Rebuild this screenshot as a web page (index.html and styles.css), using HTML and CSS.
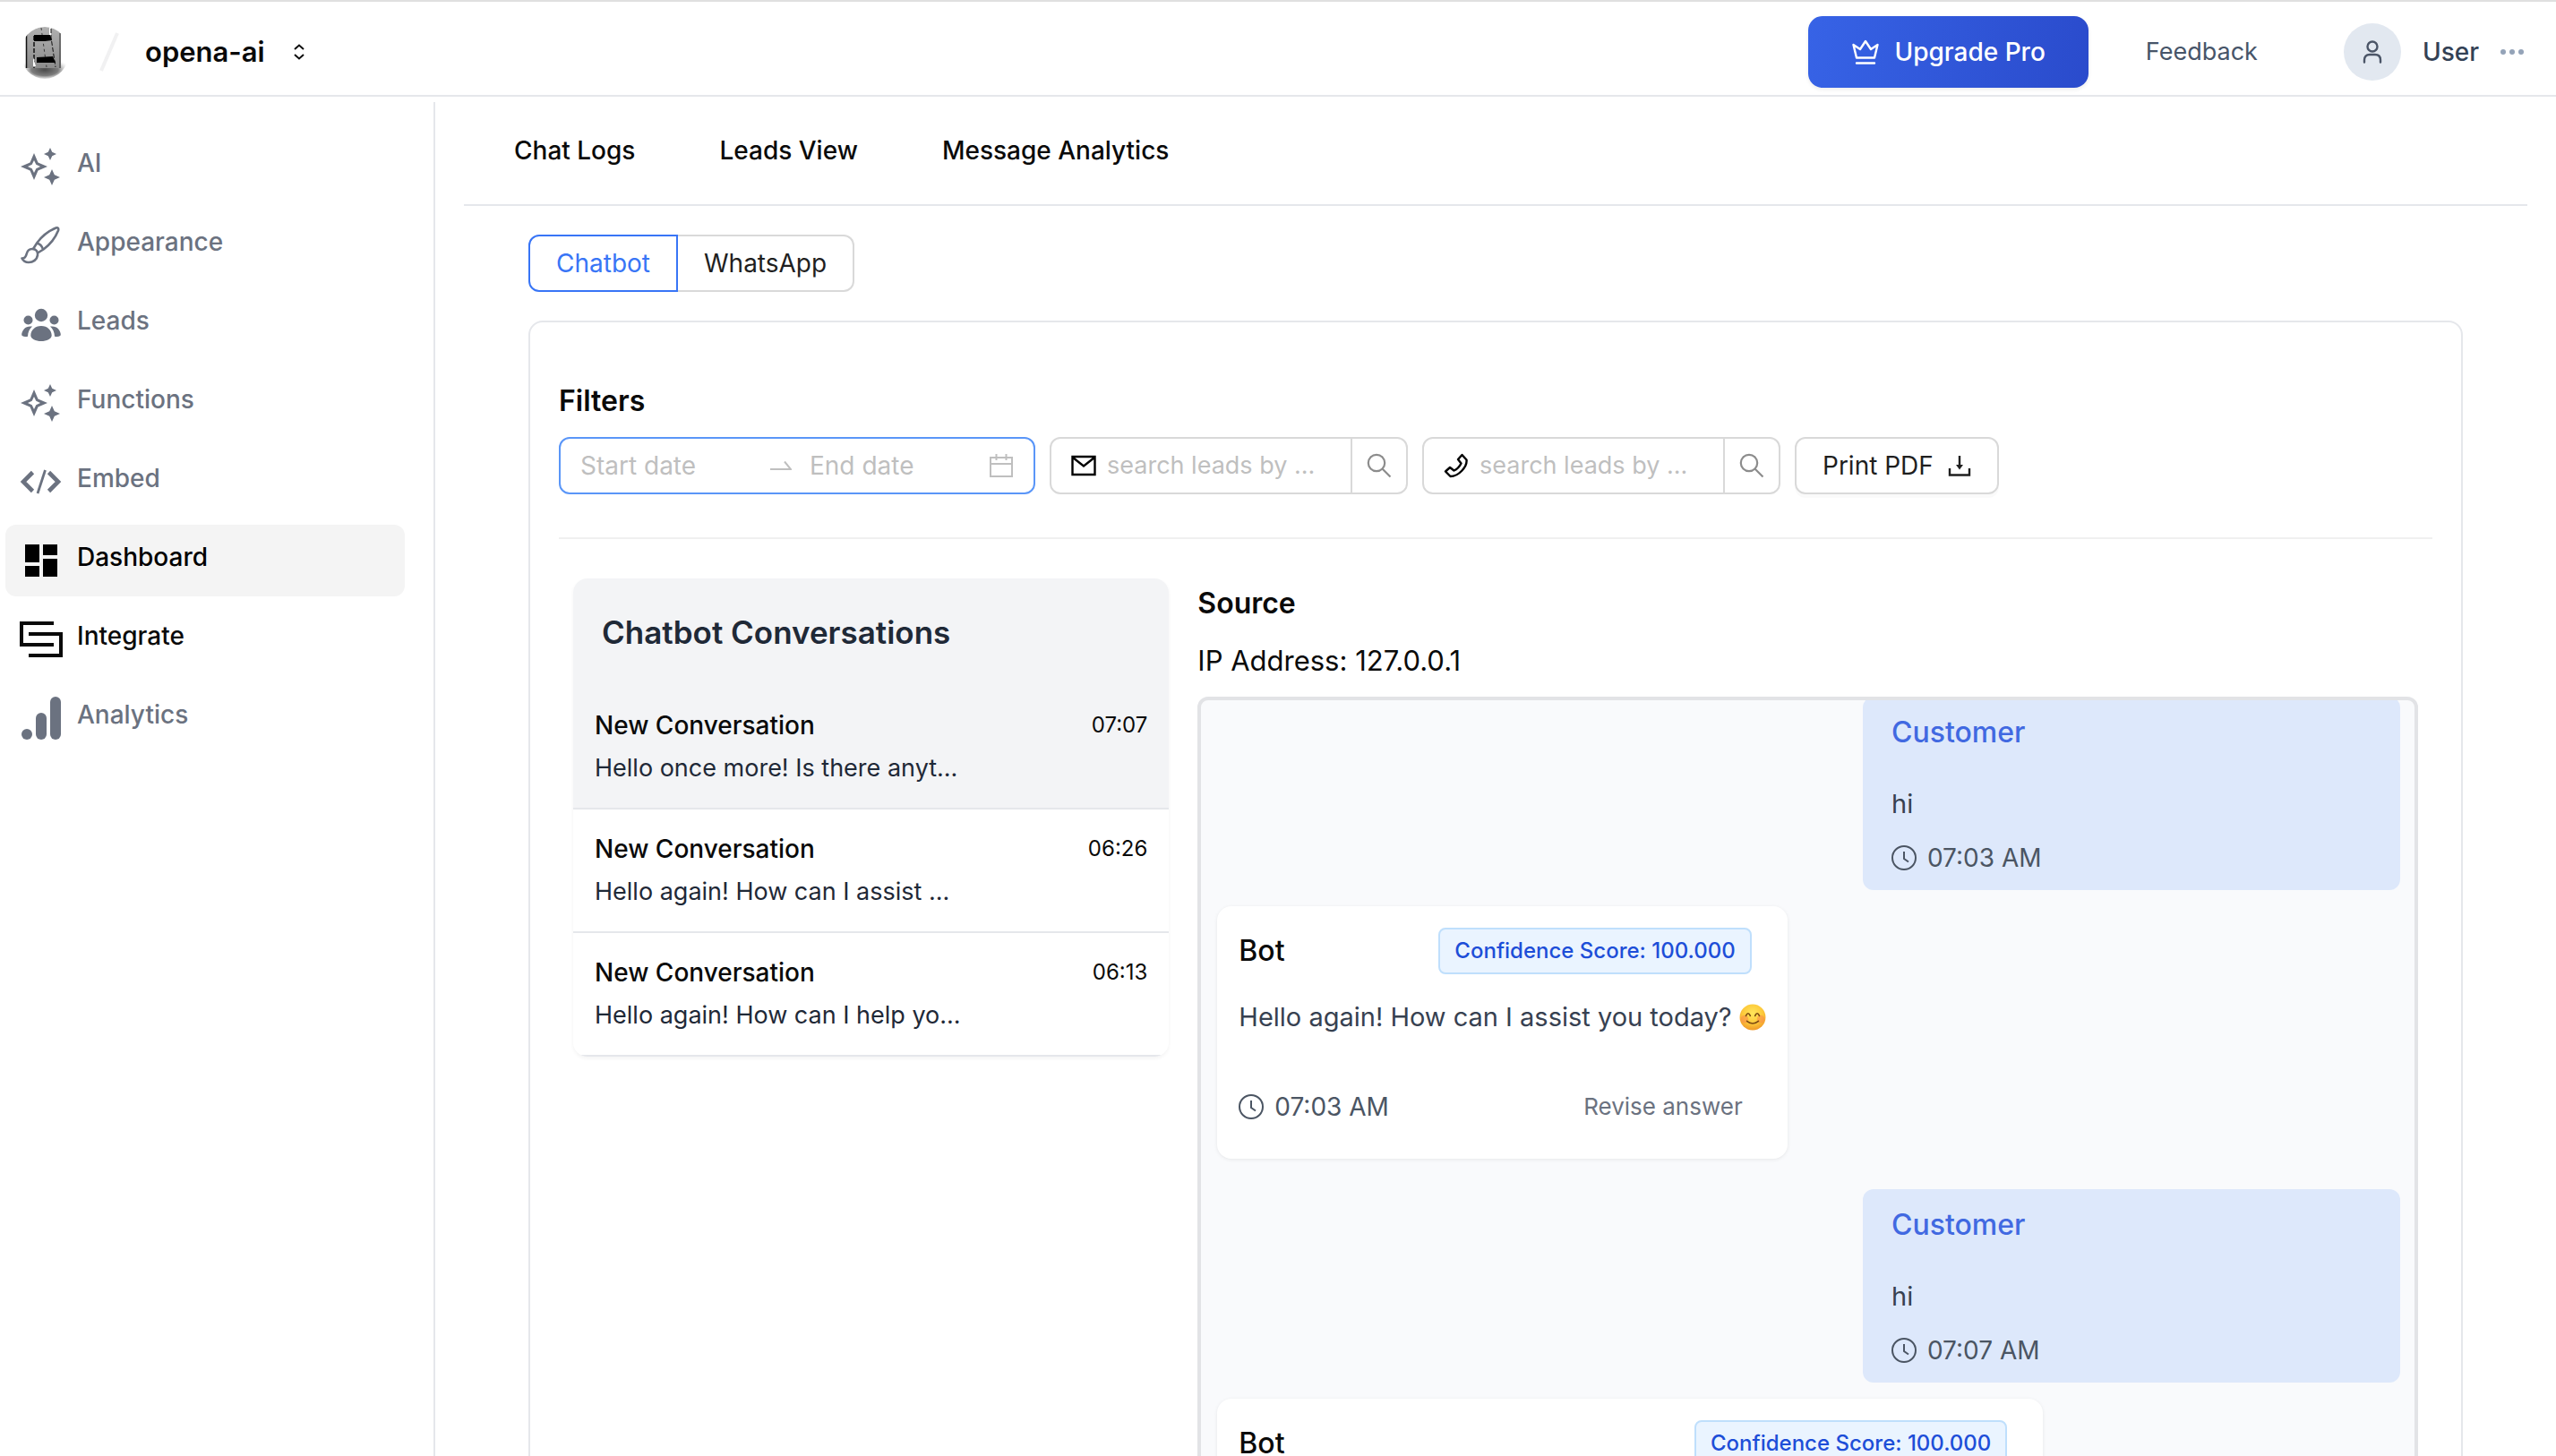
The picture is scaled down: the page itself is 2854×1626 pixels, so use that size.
FILE: index.html
```html
<!DOCTYPE html>
<html lang="en">
<head>
<meta charset="utf-8">
<meta name="viewport" content="width=device-width, initial-scale=1">
<title>opena-ai – Dashboard</title>
<link rel="stylesheet" href="styles.css">
</head>
<body>
<div class="app">
  <header class="topbar">
    <a class="logo" href="#" aria-label="Home">
      <svg width="56" height="60" viewBox="0 0 56 60">
        <defs>
          <radialGradient id="shade" cx="28" cy="50" r="30" gradientTransform="translate(0 28) scale(1 .44)" gradientUnits="userSpaceOnUse">
            <stop offset="0" stop-color="#4a4a4a"/><stop offset=".5" stop-color="#7d7d7d"/><stop offset="1" stop-color="#fff" stop-opacity="0"/>
          </radialGradient>
          <linearGradient id="metal" x1="0" y1="0" x2="0" y2="1">
            <stop offset="0" stop-color="#b0b0b0"/><stop offset="1" stop-color="#8c8c8c"/>
          </linearGradient>
          <clipPath id="round"><ellipse cx="28" cy="31" rx="27" ry="29"/></clipPath>
        </defs>
        <g clip-path="url(#round)">
          <ellipse cx="28" cy="50" rx="30" ry="13" fill="url(#shade)"/>
          <path d="M7 10Q16 2 28 2t18 7V48H7z" fill="url(#metal)"/>
          <path d="M33 2h2v10h-2z" fill="#fff"/>
          <path d="M35 4v10l5 33" fill="none" stroke="#111" stroke-dasharray="5 2"/>
          <path d="M7.500 9v39" stroke="#111" stroke-width="1.500"/>
          <path d="M45 9v39" stroke="#333"/>
          <path d="M16 12v36" stroke="#111" stroke-width="1.500" stroke-dasharray="5 2"/>
          <path d="M24 3l6 44" stroke="#222" stroke-width=".8" stroke-dasharray="3 3"/>
          <path d="M16 11h18l2 6-8 1H16zM19 36l18-1 3 7H19z" fill="#000"/>
          <path d="M15 36l3 10h-3z" fill="#fff"/>
        </g>
      </svg>
    </a>
    <svg class="slash" width="24" height="44" viewBox="0 0 24 44"><path d="M3 43L21 1" stroke="#f1f1f2" stroke-width="4"/></svg>
    <button class="project" type="button">opena-ai
      <svg width="12" height="18" viewBox="0 0 12 18" fill="none" stroke="#0a0a0a" stroke-width="2"><path d="M1 6l5-4.500L11 6M1 12l5 4.500L11 12"/></svg>
    </button>
    <button class="upgrade" type="button">
      <svg width="32" height="32" viewBox="0 0 32 32" fill="none" stroke="#fff" stroke-width="2.400" stroke-linejoin="round" stroke-linecap="round"><path d="M2.500 8l7.500 5 6-9 6 9 7.500-5-3.500 14.500h-20zM6 28.500h20"/></svg>
      Upgrade Pro
    </button>
    <a class="feedback" href="#">Feedback</a>
    <button class="account" type="button">
      <span class="avatar"><svg width="24" height="28" viewBox="0 0 24 28" fill="none" stroke="#4b5567" stroke-width="2.400" stroke-linecap="round"><circle cx="12" cy="8" r="5.500"/><path d="M3 25.500v-2.500q0-6 6-6h6q6 0 6 6v2.500"/></svg></span>
      User
      <svg class="dots" width="26" height="6" viewBox="0 0 26 6" fill="#94a3b8"><circle cx="3" cy="3" r="3"/><circle cx="13" cy="3" r="3"/><circle cx="23" cy="3" r="3"/></svg>
    </button>
  </header>

  <div class="body">
    <nav class="sidebar" aria-label="Main">
      <a class="nav-item" href="#">
        <svg class="nav-icon" viewBox="0 0 48 48" fill="currentColor"><path fill-rule="evenodd" d="M16 9l4.500 10.500L31 24l-10.500 4.500L16 39l-4.500-10.500L1 24l10.500-4.500zM16 17l-2.300 4.700L9 24l4.700 2.300L16 31l2.300-4.700L23 24l-4.700-2.300z"/><path d="M34 3l2.200 4.800L41 10l-4.800 2.200L34 17l-2.200-4.800L27 10l4.800-2.200zM36 27l2.800 6.200L45 36l-6.200 2.800L36 45l-2.800-6.200L27 36l6.200-2.800z"/></svg>
        <span class="nav-label">AI</span></a>
      <a class="nav-item" href="#">
        <svg class="nav-icon" viewBox="0 0 48 48" fill="none" stroke="currentColor" stroke-width="2.600" stroke-linejoin="round"><path d="M2.500 38.500c3 .3 4.500-2 5.200-5C8.500 30 11 28 14 28c4.500 0 6.500 3 6 7-.7 5-5 8-10 8-4 0-6-1.500-7.500-4.500z"/><path d="M15 28l4.500-7C25 13.500 33 7.500 40.500 4.500c2.200-.7 3.200.8 2.500 3C40 15 34 23 26.500 28.500L20 32.500M19 21.500c3.500.7 6 3.500 7 7"/></svg>
        <span class="nav-label">Appearance</span></a>
      <a class="nav-item" href="#">
        <svg class="nav-icon" viewBox="0 0 48 48" fill="currentColor"><circle cx="24" cy="14" r="7.200"/><circle cx="9.500" cy="19.500" r="5"/><circle cx="38.500" cy="19.500" r="5"/><path d="M24 26c-7 0-11.700 5-11.700 10.500 0 4 5.700 6.500 11.700 6.500s11.700-2.500 11.700-6.500C35.700 31 31 26 24 26zM14 26.600c-3.700-.6-7 .3-9 2.700s-2.800 4.700-2.800 6.200c0 2.500 3 2.600 6.800 2.200.2-4.500 2-8.500 5-11.100zM34 26.600c3.700-.6 7 .3 9 2.700s2.800 4.700 2.800 6.200c0 2.500-3 2.600-6.800 2.200-.2-4.500-2-8.500-5-11.100z"/></svg>
        <span class="nav-label">Leads</span></a>
      <a class="nav-item" href="#">
        <svg class="nav-icon" viewBox="0 0 48 48" fill="currentColor"><path fill-rule="evenodd" d="M16 9l4.500 10.500L31 24l-10.500 4.500L16 39l-4.500-10.500L1 24l10.500-4.500zM16 17l-2.300 4.700L9 24l4.700 2.300L16 31l2.300-4.700L23 24l-4.700-2.300z"/><path d="M34 3l2.200 4.800L41 10l-4.800 2.200L34 17l-2.200-4.800L27 10l4.800-2.200zM36 27l2.800 6.200L45 36l-6.200 2.800L36 45l-2.800-6.200L27 36l6.200-2.800z"/></svg>
        <span class="nav-label">Functions</span></a>
      <a class="nav-item" href="#">
        <svg class="nav-icon" viewBox="0 0 48 48" fill="none" stroke="currentColor" stroke-width="4.600"><path d="M14.500 13.500L4 24l10.500 10.500M32.500 13.500L43 24 32.500 34.500"/><path d="M28.500 11L20 37" stroke-width="2.800"/></svg>
        <span class="nav-label">Embed</span></a>
      <a class="nav-item active" href="#" aria-current="page">
        <svg class="nav-icon" viewBox="0 0 48 48" fill="currentColor"><path d="M6 6h16v20H6zM26 6h16v12H26zM6 30h16v12H6zM26 22h16v20H26z"/></svg>
        <span class="nav-label">Dashboard</span></a>
      <a class="nav-item dark" href="#">
        <svg class="nav-icon" viewBox="0 0 48 48" fill="none" stroke="currentColor" stroke-width="4"><path d="M38 6H2v24h36M10 18h36v24H10"/></svg>
        <span class="nav-label">Integrate</span></a>
      <a class="nav-item" href="#">
        <svg class="nav-icon" viewBox="0 0 48 48" fill="currentColor"><circle cx="8" cy="42" r="6"/><rect x="18" y="18" width="12" height="30" rx="6"/><rect x="34" y="0" width="12" height="48" rx="6"/></svg>
        <span class="nav-label">Analytics</span></a>
    </nav>

    <main class="main">
      <nav class="tabs" aria-label="Dashboard views">
        <a href="#">Chat Logs</a>
        <a href="#">Leads View</a>
        <a href="#">Message Analytics</a>
      </nav>

      <div class="content">
        <div class="segmented">
          <button class="segment selected" type="button" aria-pressed="true">Chatbot</button>
          <button class="segment" type="button" aria-pressed="false">WhatsApp</button>
        </div>

        <section class="panel">
          <h2 class="filters-title">Filters</h2>
          <div class="filters">
            <div class="date-range">
              <input class="start" type="text" placeholder="Start date" aria-label="Start date">
              <svg width="24" height="12" viewBox="0 0 24 12" fill="none" stroke="#bfbfbf" stroke-width="2"><path d="M0 10h23L16 1.500"/></svg>
              <input class="end" type="text" placeholder="End date" aria-label="End date">
              <svg width="28" height="28" viewBox="0 0 28 28" fill="none" stroke="#bfbfbf" stroke-width="2"><path d="M2 5h24v21H2zM2 12h24M8.500 1v7M19.500 1v7"/></svg>
            </div>
            <div class="search">
              <svg width="28" height="24" viewBox="0 0 28 24" fill="none" stroke="#000" stroke-width="2.400"><path d="M1.500 2h25v20h-25zM2 3l12 9.500L26 3"/></svg>
              <input type="text" placeholder="search leads by ..." aria-label="Search leads by email">
              <button type="button" aria-label="Search by email"><svg width="28" height="28" viewBox="0 0 28 28" fill="none" stroke="#8c8c8c" stroke-width="2.200"><circle cx="11" cy="11" r="9.200"/><path d="M17.500 17.500l9 9"/></svg></button>
            </div>
            <div class="search">
              <svg width="28" height="28" viewBox="0 0 28 28" fill="none" stroke="#000" stroke-width="2.400" stroke-linejoin="round"><path d="M20.500 2l5 5.500c1 8-9 18.500-18 18.500L2 20.500l5-4.500 4.500 3.500c3.500-1.500 6-4 8-8L16 7z"/></svg>
              <input type="text" placeholder="search leads by ..." aria-label="Search leads by phone">
              <button type="button" aria-label="Search by phone"><svg width="28" height="28" viewBox="0 0 28 28" fill="none" stroke="#8c8c8c" stroke-width="2.200"><circle cx="11" cy="11" r="9.200"/><path d="M17.500 17.500l9 9"/></svg></button>
            </div>
            <button class="print" type="button">Print PDF
              <svg width="26" height="24" viewBox="0 0 26 24" fill="none" stroke="#1f1f1f" stroke-width="2.400"><path d="M13 1v12M2 15v7.500h22V15"/><path d="M9 11h8l-4 5.500z" fill="#1f1f1f" stroke="none"/></svg>
            </button>
          </div>

          <div class="columns">
            <div class="column">
              <div class="conversations">
                <h3>Chatbot Conversations</h3>
                <ul>
                  <li class="conversation current">
                    <span class="title">New Conversation</span><time>07:07</time>
                    <p>Hello once more! Is there anyt...</p>
                  </li>
                  <li class="conversation">
                    <span class="title">New Conversation</span><time>06:26</time>
                    <p>Hello again! How can I assist ...</p>
                  </li>
                  <li class="conversation">
                    <span class="title">New Conversation</span><time>06:13</time>
                    <p>Hello again! How can I help yo...</p>
                  </li>
                </ul>
              </div>
            </div>

            <div class="column">
              <h3 class="source">Source</h3>
              <p class="address">IP Address: 127.0.0.1</p>
              <div class="chat">
                <div class="messages">
                  <article class="customer">
                    <h4>Customer</h4>
                    <p>hi</p>
                    <time class="stamp"><svg width="28" height="28" viewBox="0 0 28 28" fill="none" stroke="currentColor" stroke-width="2"><circle cx="14" cy="14" r="13"/><path d="M14 7v8l5 3.500"/></svg>07:03 AM</time>
                  </article>
                  <article class="bot">
                    <div class="bot-head"><h4>Bot</h4><span class="score">Confidence Score: 100.000</span></div>
                    <p>Hello again! How can I assist you today?
                      <svg class="emoji" width="30" height="30" viewBox="0 0 28 28" role="img" aria-label="smiling face"><defs><radialGradient id="face" cx=".5" cy=".35" r=".65"><stop offset="0" stop-color="#ffe65c"/><stop offset=".6" stop-color="#fdc93a"/><stop offset="1" stop-color="#f09a28"/></radialGradient></defs><circle cx="14" cy="14" r="13.500" fill="url(#face)"/><circle cx="5.500" cy="16" r="4" fill="#f98b4a" opacity=".55"/><circle cx="22.500" cy="16" r="4" fill="#f98b4a" opacity=".55"/><path d="M7 12.500q2.200-5 4.500 0M16.500 12.500q2.200-5 4.500 0M8 18q6 5 12 0" fill="none" stroke="#7b4a12" stroke-width="1.500" stroke-linecap="round"/></svg>
                    </p>
                    <div class="bot-foot">
                      <time class="stamp"><svg width="28" height="28" viewBox="0 0 28 28" fill="none" stroke="currentColor" stroke-width="2"><circle cx="14" cy="14" r="13"/><path d="M14 7v8l5 3.500"/></svg>07:03 AM</time>
                      <button class="revise" type="button">Revise answer</button>
                    </div>
                  </article>
                  <article class="customer">
                    <h4>Customer</h4>
                    <p>hi</p>
                    <time class="stamp"><svg width="28" height="28" viewBox="0 0 28 28" fill="none" stroke="currentColor" stroke-width="2"><circle cx="14" cy="14" r="13"/><path d="M14 7v8l5 3.500"/></svg>07:07 AM</time>
                  </article>
                  <article class="bot long">
                    <div class="bot-head"><h4>Bot</h4><span class="score">Confidence Score: 100.000</span></div>
                  </article>
                </div>
              </div>
            </div>
          </div>
        </section>
      </div>
    </main>
  </div>
</div>
</body>
</html>
```

FILE: styles.css
```css
*, *::before, *::after { box-sizing: border-box; }

body {
  margin: 0;
  background: #fff;
  color: #0a0a0a;
  font-family: Inter, "Liberation Sans", sans-serif;
  font-size: 28px;
  line-height: 40px;
}

h2, h3, h4, p, ul { margin: 0; padding: 0; }
ul { list-style: none; }
a { color: inherit; text-decoration: none; }
button, input { font: inherit; color: inherit; background: none; border: 0; padding: 0; margin: 0; }
button { cursor: pointer; white-space: nowrap; }
svg { display: block; flex: none; }
input { min-width: 0; outline: 0; }
input::placeholder { color: #bfbfbf; opacity: 1; }

.app {
  height: 100vh;
  display: flex;
  flex-direction: column;
  overflow: hidden;
}

/* Top bar */
.topbar {
  flex: none;
  display: flex;
  align-items: center;
  padding: 16px 36px 8px 22px;
  border-top: 2px solid #e0e0e0;
  border-bottom: 2px solid #e5e7eb;
}
.slash { margin-left: 32px; }
.project {
  display: flex;
  align-items: center;
  gap: 32px;
  margin-left: 28px;
  font-size: 31px;
  font-weight: 600;
}
.upgrade {
  display: flex;
  align-items: center;
  gap: 16px;
  height: 80px;
  margin-left: auto;
  padding: 0 48px;
  border-radius: 16px;
  background: linear-gradient(100deg, #3763e6, #2a4bcc);
  box-shadow: 0 2px 4px rgba(0, 0, 0, .08);
  color: #fff;
  font-weight: 500;
}
.feedback { margin-left: 64px; color: #475569; font-size: 27px; }
.account {
  display: flex;
  align-items: center;
  gap: 24px;
  margin-left: 96px;
  color: #334155;
  font-weight: 500;
}
.avatar {
  display: grid;
  place-items: center;
  width: 64px;
  height: 64px;
  border-radius: 50%;
  background: #e2e8f0;
}

.body { flex: 1; min-height: 0; display: flex; }

/* Side navigation */
.sidebar {
  flex: none;
  width: 486px;
  margin-top: 6px;
  padding: 32px 32px 0 6px;
  border-right: 2px solid #e5e7eb;
  display: flex;
  flex-direction: column;
  gap: 8px;
}
.nav-item {
  display: flex;
  align-items: center;
  gap: 16px;
  height: 80px;
  padding: 0 16px;
  border-radius: 12px;
  color: #6b7280;
  font-weight: 500;
}
.nav-icon { width: 48px; height: 48px; }
.nav-label { padding-bottom: 8px; }
.nav-item.dark { color: #0a0a0a; }
.nav-item.active { background: #f4f4f4; color: #000; }

/* Main area */
.main {
  flex: 1;
  min-width: 0;
  padding: 0 32px;
  overflow-y: auto;
  scrollbar-width: none;
}
.tabs {
  display: flex;
  gap: 94px;
  padding: 40px 56px;
  border-bottom: 2px solid #e5e7eb;
  font-weight: 500;
}
.content { padding: 32px 72px; }

.segmented { display: flex; }
.segment {
  height: 64px;
  padding: 0 29px;
  border: 2px solid #d9d9d9;
  border-left: 0;
  border-radius: 0 12px 12px 0;
  color: #1f1f1f;
}
.segment.selected {
  border: 2px solid #3875f6;
  border-radius: 12px 0 0 12px;
  color: #3875f6;
}

.panel {
  margin-top: 32px;
  padding: 64px 32px;
  border: 2px solid #e5e7eb;
  border-radius: 16px;
}
.filters-title { font-size: 32px; font-weight: 600; line-height: 48px; }
.filters {
  display: flex;
  flex-wrap: wrap;
  gap: 16px;
  margin-top: 16px;
  padding-bottom: 48px;
  border-bottom: 2px solid #f0f0f0;
}
.date-range, .search, .print {
  display: flex;
  align-items: center;
  height: 64px;
  border: 2px solid #d9d9d9;
  border-radius: 12px;
}
.date-range { width: 532px; padding: 0 22px; border-color: #5a96f8; }
.date-range .start { width: 212px; }
.date-range .end { flex: 1; margin-left: 20px; }
.search { width: 400px; padding-left: 22px; }
.search input { flex: 1; margin: 0 12px; font-size: 27px; }
.search button {
  display: grid;
  place-items: center;
  width: 62px;
  height: 100%;
  border-left: 2px solid #d9d9d9;
}
.print {
  gap: 16px;
  padding: 0 29px;
  box-shadow: 0 4px 0 rgba(0, 0, 0, .02);
  color: #1f1f1f;
}

.columns { display: grid; grid-template-columns: 1fr 2fr; margin-top: 44px; }
.column { min-width: 0; padding: 0 16px; }

/* Conversation list */
.conversations {
  overflow: hidden;
  border-radius: 16px;
  box-shadow: 0 2px 4px rgba(0, 0, 0, .05);
}
.conversations h3 {
  padding: 36px 32px;
  background: #f3f4f6;
  color: #1f2937;
  font-size: 35px;
  font-weight: 600;
  line-height: 48px;
}
.conversation {
  display: grid;
  grid-template-columns: 1fr auto;
  row-gap: 8px;
  padding: 24px;
  border-bottom: 2px solid #e5e7eb;
}
.conversation.current { background: #f3f4f6; }
.conversation .title { font-weight: 500; }
.conversation time { font-size: 24px; }
.conversation p { grid-column: 1 / -1; color: #1f2937; font-size: 27px; }

/* Chat transcript */
.source { font-size: 32px; font-weight: 600; line-height: 56px; }
.address { margin-top: 12px; font-size: 31px; line-height: 48px; }
.chat {
  margin-top: 16px;
  padding: 0 16px 16px 18px;
  overflow: hidden;
  border: 4px solid #e2e3e6;
  border-radius: 12px;
  background: #f9fafc;
}
.messages {
  display: flex;
  flex-direction: column;
  align-items: flex-start;
  gap: 18px;
  margin-top: -4px;
}
.messages h4 { font-size: 32px; font-weight: 500; line-height: 48px; }
.messages p { color: #374151; font-size: 29px; line-height: 48px; }
.stamp { display: flex; align-items: center; gap: 12px; color: #4b5563; }

.customer {
  align-self: flex-end;
  width: 600px;
  padding: 16px 32px;
  border-radius: 12px;
  background: #dde8fb;
}
.customer h4 { color: #4169e1; }
.customer p { margin: 32px 0 16px; }

.bot {
  padding: 24px 24px 38px;
  margin-bottom: 16px;
  border-radius: 16px;
  background: #fff;
  box-shadow: 0 1px 4px rgba(0, 0, 0, .08);
}
.bot.long { width: 922px; max-width: 100%; min-height: 282px; }
.bot-head { display: flex; align-items: center; justify-content: space-between; padding-right: 16px; }
.score {
  padding: 4px 16px;
  border: 2px solid #bfdffc;
  border-radius: 8px;
  background: #eaf4ff;
  color: #1d4ed8;
  font-size: 24px;
  font-weight: 500;
}
.bot p { display: flex; align-items: center; gap: 8px; margin: 24px 0 56px; }
.bot-foot { display: flex; align-items: center; justify-content: space-between; padding-right: 26px; }
.revise { color: #6b7280; font-size: 26px; }
```
